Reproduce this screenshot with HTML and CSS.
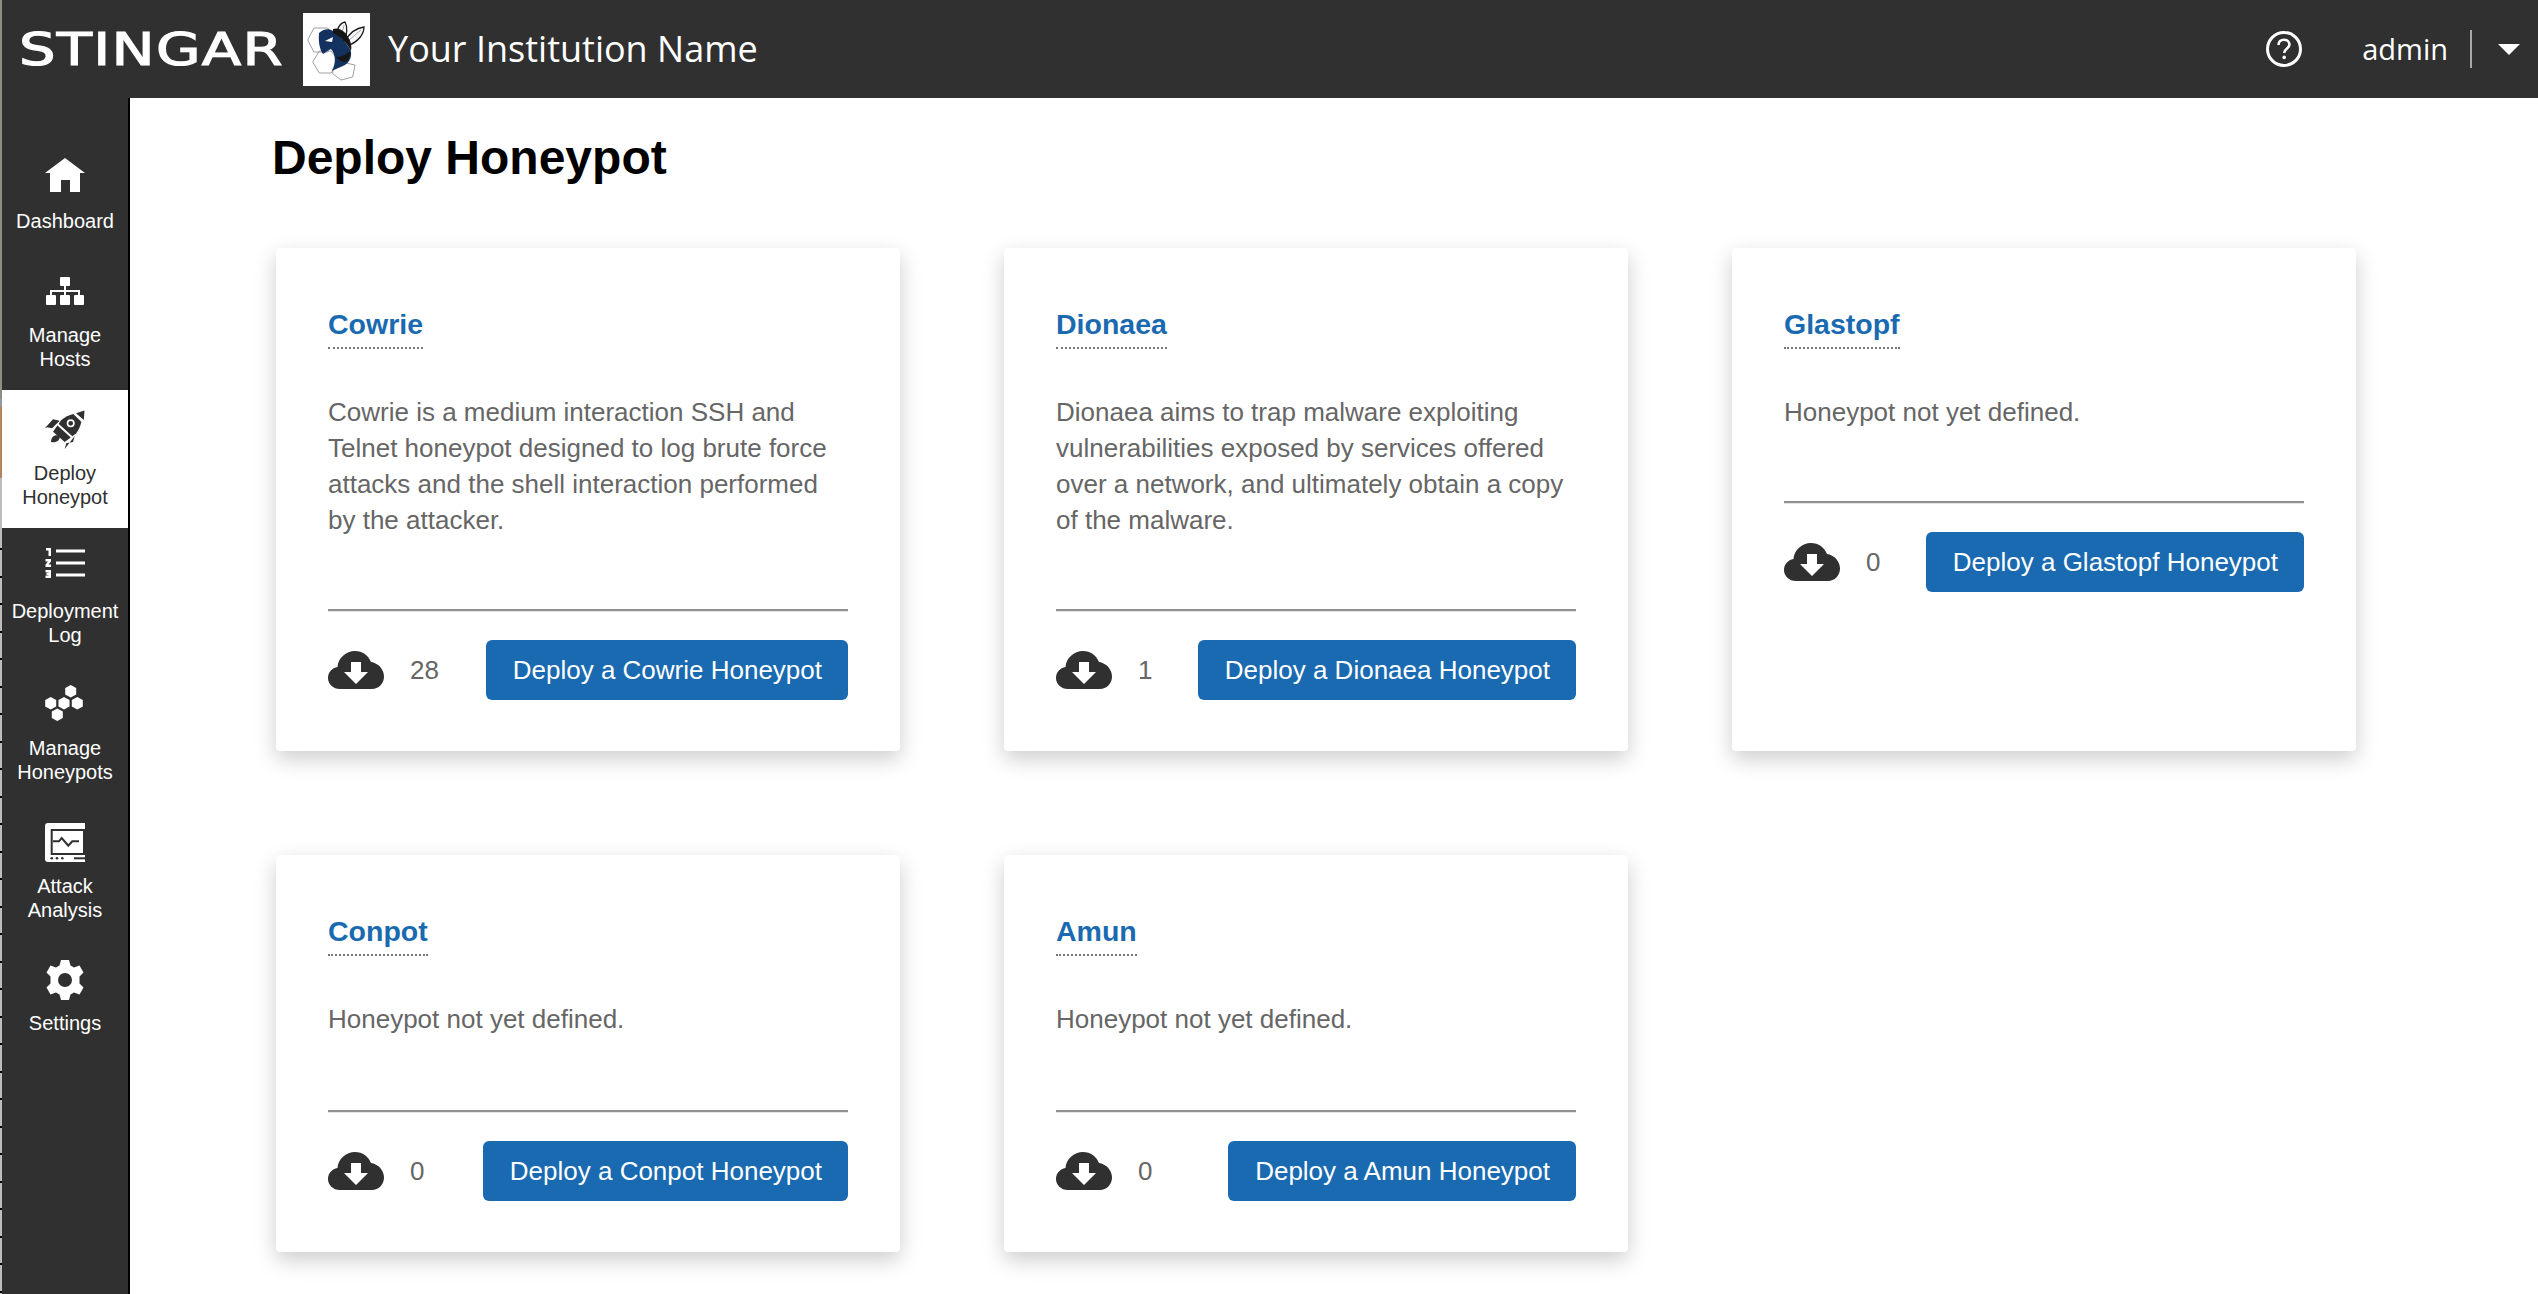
FILE: index.html
```html
<!DOCTYPE html>
<html lang="en">
<head>
    <meta charset="UTF-8">
    <meta name="viewport" content="width=device-width, initial-scale=1.0">
    <title>Deploy Honeypot</title>
    <link rel="stylesheet" href="styles.css">
</head>
<body>
    <header class="topbar">
        <div class="brand">
            <span class="brand-name"><span class="brand-text">STINGAR</span></span>
            <div class="brand-logo">
                <svg viewBox="0 0 67 73" width="67" height="73">
                    <g fill="none" stroke="#a0a0a0" stroke-width="1">
                        <path d="M4.700 27 L11 15 L24.700 15 L30.700 27 L24.700 39 L11 39 Z"/>
                        <path d="M9.700 49 L16.300 38 L28 38 L36.300 49 L28 60 L16.300 60 Z"/>
                        <path d="M29.700 55.700 L38 49 L52 52 L49.700 64 L38 67 L29.700 60.700 Z"/>
                    </g>
                    <g fill="#f6f6f6" stroke="#1a1a1a" stroke-width="1.300">
                        <path d="M33 26 C33 18 36 10 42 9 C45 14 44 22 41 28 Z"/>
                        <path d="M42 28 C46 21 53 15 61 14 C61 21 55 29 46 32 Z"/>
                    </g>
                    <g fill="none" stroke="#8a8a8a" stroke-width="0.700">
                        <path d="M38 24 L41 12"/>
                        <path d="M46 27 L58 17"/>
                    </g>
                    <path d="M16 20 C20 16 26 15 30 18 C36 22 42 28 47 36 C50 42 47 50 40 53 C36 55 32 56 29 58 C33 50 33 42 28 36 C25 37 22 40 20 41 C18 38 15 32 16 20 Z" fill="#13325f"/>
                    <path d="M30 16 C36 14 42 18 45 24 C48 28 49 34 48 38 C44 30 38 24 30 20 Z" fill="#161616"/>
                    <path d="M33 44 C38 44 43 42 47 38 C48 42 46 46 43 49 C39 49 36 47 33 44 Z" fill="#161616"/>
                    <path d="M22 28 L30 24 L29 29 Z" fill="#fff"/>
                </svg>
            </div>
            <span class="institution">Your Institution Name</span>
        </div>
        <div class="user-menu">
            <svg class="help-icon" viewBox="0 0 36 36" width="36" height="36">
                <circle cx="18" cy="18" r="16.500" fill="none" stroke="#fff" stroke-width="3"/>
                <path d="M12.500 14 C12.500 10.500 15 8.800 18 8.800 C21.200 8.800 23.500 10.800 23.500 13.600 C23.500 17.400 18.200 17.600 18.200 22" fill="none" stroke="#fff" stroke-width="2.600"/>
                <circle cx="18.200" cy="26.400" r="1.800" fill="#fff"/>
            </svg>
            <span class="user-name">admin</span>
            <span class="user-divider"></span>
            <span class="user-caret"></span>
        </div>
    </header>

    <div class="layout">
        <nav class="sidebar">
            <a class="nav-item nav-first">
                <div class="icon-slot">
                    <svg viewBox="0 0 40 34" width="40" height="34"><path d="M20 0 L40 15 L35 15 L35 34 L25 34 L25 22 L16 22 L16 34 L5 34 L5 15 L0 15 Z" fill="#fff"/></svg>
                </div>
                <span>Dashboard</span>
            </a>
            <a class="nav-item">
                <div class="icon-slot icon-low">
                    <svg viewBox="0 0 38 28" width="38" height="28"><g fill="#fff"><rect x="14" y="0" width="10" height="9" rx="1"/><rect x="0" y="18" width="10" height="10" rx="1"/><rect x="14" y="18" width="10" height="10" rx="1"/><rect x="28" y="18" width="10" height="10" rx="1"/><rect x="18" y="9" width="2" height="9"/><rect x="4" y="13" width="30" height="2"/><rect x="4" y="13" width="2" height="5"/><rect x="32" y="13" width="2" height="5"/></g></svg>
                </div>
                <span>Manage<br>Hosts</span>
            </a>
            <a class="nav-item active">
                <div class="icon-slot">
                    <svg viewBox="0 0 40 40" width="40" height="40">
                        <g fill="#303030">
                            <path d="M31 3.300 L39.500 0.500 L38.800 10 Z"/>
                            <path d="M28.300 4 L36.300 11.700 C35.500 16 33.500 20 31.300 23.300 L19.700 32 L8 21.700 L16.300 10 C20 7 24 5 28.300 4 Z"/>
                            <path d="M-0.300 18.300 L8 9.300 L14.700 10.700 L7 18.300 L2.300 17.300 Z"/>
                            <path d="M19.700 39 L29.700 26 L28 32 L21.300 33.300 Z"/>
                            <path d="M14.700 26 C10 24 6 27 6 32 C11 33 15 31 14.700 26 Z"/>
                        </g>
                        <path d="M12.300 14 L27 27.300" stroke="#fff" stroke-width="2"/>
                        <circle cx="25.700" cy="13.300" r="3.200" fill="none" stroke="#fff" stroke-width="1.600"/>
                    </svg>
                </div>
                <span>Deploy<br>Honeypot</span>
            </a>
            <a class="nav-item">
                <div class="icon-slot">
                    <svg viewBox="0 0 40 30" width="40" height="30"><g fill="#fff"><rect x="11" y="1.500" width="29" height="3"/><rect x="11" y="13.500" width="29" height="3"/><rect x="11" y="25.500" width="29" height="3"/><path d="M1 0 H6 V8 H3.500 V2.500 H1 Z"/><path d="M0.500 11 H6 V13.500 L3.500 16.500 H6 V19 H0.500 V16.500 L3 13.500 H0.500 Z"/><path d="M0.500 22 H6 V30 H0.500 V27.500 H3.500 V27 H1.500 V25 H3.500 V24.500 H0.500 Z"/></g></svg>
                </div>
                <span>Deployment<br>Log</span>
            </a>
            <a class="nav-item">
                <div class="icon-slot">
                    <svg viewBox="0 0 40 36" width="40" height="36"><g fill="#fff"><path d="M25.700 0 L31.200 3 V9.500 L25.700 12.500 L20.200 9.500 V3 Z"/><path d="M5.700 12 L11.200 15 V21.500 L5.700 24.500 L0.200 21.500 V15 Z"/><path d="M19 12 L24.500 15 V21.500 L19 24.500 L13.500 21.500 V15 Z"/><path d="M32.300 12 L37.800 15 V21.500 L32.300 24.500 L26.800 21.500 V15 Z"/><path d="M12.300 23.500 L17.800 26.500 V33 L12.300 36 L6.800 33 V26.500 Z"/></g></svg>
                </div>
                <span>Manage<br>Honeypots</span>
            </a>
            <a class="nav-item">
                <div class="icon-slot">
                    <svg viewBox="0 0 40 39" width="40" height="39">
                        <path d="M3 0 H40 V39 H3 Q0 39 0 36 V3 Q0 0 3 0 Z" fill="#fff"/>
                        <rect x="6.700" y="7" width="32.300" height="24" fill="none" stroke="#303030" stroke-width="2"/>
                        <path d="M8 18.300 H14 L16.700 15 L23.300 22.700 L27.300 18.300 H34" fill="none" stroke="#303030" stroke-width="2"/>
                        <g fill="#303030">
                            <circle cx="6.700" cy="35.300" r="1.300"/>
                            <circle cx="12" cy="35.300" r="1.300"/>
                            <circle cx="17.300" cy="35.300" r="1.300"/>
                            <rect x="29" y="34.300" width="11" height="2"/>
                        </g>
                    </svg>
                </div>
                <span>Attack<br>Analysis</span>
            </a>
            <a class="nav-item">
                <div class="icon-slot">
                    <svg viewBox="0 0 40 40" width="40" height="40"><path fill="#fff" fill-rule="evenodd" d="M16 0 H24 L25.500 5.500 L29 7.500 L34.500 5.500 L38.500 12.500 L34.500 16.500 V23.500 L38.500 27.500 L34.500 34.500 L29 32.500 L25.500 34.500 L24 40 H16 L14.500 34.500 L11 32.500 L5.500 34.500 L1.500 27.500 L5.500 23.500 V16.500 L1.500 12.500 L5.500 5.500 L11 7.500 L14.500 5.500 Z M20 13 A7 7 0 1 0 20 27 A7 7 0 1 0 20 13 Z"/></svg>
                </div>
                <span>Settings</span>
            </a>
        </nav>

        <main class="content">
            <h1 class="page-title">Deploy Honeypot</h1>
            <div class="card-grid">
                <section class="card">
                    <h2 class="card-title">Cowrie</h2>
                    <p class="card-text">Cowrie is a medium interaction SSH and Telnet honeypot designed to log brute force attacks and the shell interaction performed by the attacker.</p>
                    <hr class="card-rule">
                    <div class="card-foot">
                        <svg class="cloud" viewBox="0 0 56 38" width="56" height="38"><use href="#cloud-shape"/></svg>
                        <span class="count">28</span>
                        <button class="deploy-btn" type="button">Deploy a Cowrie Honeypot</button>
                    </div>
                </section>
                <section class="card">
                    <h2 class="card-title">Dionaea</h2>
                    <p class="card-text">Dionaea aims to trap malware exploiting vulnerabilities exposed by services offered over a network, and ultimately obtain a copy of the malware.</p>
                    <hr class="card-rule">
                    <div class="card-foot">
                        <svg class="cloud" viewBox="0 0 56 38" width="56" height="38"><use href="#cloud-shape"/></svg>
                        <span class="count">1</span>
                        <button class="deploy-btn" type="button">Deploy a Dionaea Honeypot</button>
                    </div>
                </section>
                <section class="card">
                    <h2 class="card-title">Glastopf</h2>
                    <p class="card-text">Honeypot not yet defined.</p>
                    <hr class="card-rule">
                    <div class="card-foot">
                        <svg class="cloud" viewBox="0 0 56 38" width="56" height="38"><use href="#cloud-shape"/></svg>
                        <span class="count">0</span>
                        <button class="deploy-btn" type="button">Deploy a Glastopf Honeypot</button>
                    </div>
                </section>
                <section class="card">
                    <h2 class="card-title">Conpot</h2>
                    <p class="card-text">Honeypot not yet defined.</p>
                    <hr class="card-rule">
                    <div class="card-foot">
                        <svg class="cloud" viewBox="0 0 56 38" width="56" height="38"><use href="#cloud-shape"/></svg>
                        <span class="count">0</span>
                        <button class="deploy-btn" type="button">Deploy a Conpot Honeypot</button>
                    </div>
                </section>
                <section class="card">
                    <h2 class="card-title">Amun</h2>
                    <p class="card-text">Honeypot not yet defined.</p>
                    <hr class="card-rule">
                    <div class="card-foot">
                        <svg class="cloud" viewBox="0 0 56 38" width="56" height="38"><use href="#cloud-shape"/></svg>
                        <span class="count">0</span>
                        <button class="deploy-btn" type="button">Deploy a Amun Honeypot</button>
                    </div>
                </section>
            </div>
        </main>
    </div>

    <svg class="svg-defs" width="0" height="0">
        <defs>
            <g id="cloud-shape">
                <path fill="#303030" d="M12 38 C5 38 0 33 0 27 C0 21.500 4 17 9.500 16 C10 7 18 0 27 0 C34.500 0 40.500 4.500 43 11 C50 12 56 18 56 25.500 C56 32.500 50.500 38 44 38 Z"/>
                <path fill="#fff" d="M23 11 H33 V21 H40 L28 33 L16 21 H23 Z"/>
            </g>
        </defs>
    </svg>
</body>
</html>
```

FILE: styles.css
```css
* {
    box-sizing: border-box;
}
html, body {
    height: 100%;
}
body {
    margin: 0;
    padding-left: 2px;
    font-family: "Liberation Sans", Arial, sans-serif;
    color: #666;
    overflow: hidden;
    /* edge of the window behind, left in the screenshot */
    background:
        repeating-linear-gradient(#000 0 2px, transparent 2px 27.500px) 0 548px / 2px 746px no-repeat,
        linear-gradient(#8d8d84 0 398px, #8f9aa0 398px 407px, #b5845a 407px 478px, #bdbdbd 478px) 0 0 / 2px 100% no-repeat,
        #fff;
}

.topbar {
    display: flex;
    align-items: center;
    justify-content: space-between;
    height: 98px;
    background-color: #303030;
    color: #fff;
}
.brand {
    display: flex;
    align-items: center;
}
.brand-name {
    display: block;
    width: 283px;
    padding-left: 17px;
    height: 60px;
    line-height: 61px;
    overflow: hidden;
}
.brand-text {
    display: inline-block;
    font-family: "DejaVu Sans", sans-serif;
    font-size: 45px;
    letter-spacing: 1px;
    -webkit-text-stroke: 1.200px #fff;
    transform: scaleX(1.28);
    transform-origin: left center;
}
.brand-logo {
    width: 67px;
    height: 73px;
    margin-left: 18px;
    background-color: #fff;
}
.brand-logo svg {
    display: block;
}
.institution {
    margin-left: 18px;
    padding-bottom: 2px;
    font-family: "Open Sans", sans-serif;
    font-size: 36px;
}
.user-menu {
    display: flex;
    align-items: center;
    padding-right: 18px;
}
.user-name {
    margin-left: 60px;
    padding-bottom: 2px;
    font-family: "Open Sans", sans-serif;
    font-size: 29px;
}
.user-divider {
    width: 2px;
    height: 38px;
    margin-left: 22px;
    background-color: #a8a8a8;
}
.user-caret {
    width: 0;
    height: 0;
    margin-left: 26px;
    border-left: 11px solid transparent;
    border-right: 11px solid transparent;
    border-top: 11px solid #fff;
}

.layout {
    display: flex;
    height: calc(100% - 98px);
}
.sidebar {
    flex: none;
    width: 128px;
    padding-top: 17px;
    background-color: #303030;
    border-right: 2px solid #000;
}
.nav-item {
    display: block;
    height: 137.500px;
    padding-top: 20px;
    font-size: 20px;
    line-height: 24px;
    text-align: center;
    color: #fff;
}
.nav-first {
    padding-top: 43px;
}
.nav-item.active {
    background-color: #fff;
    color: #303030;
}
.icon-slot {
    display: flex;
    justify-content: center;
    align-items: flex-start;
    height: 51px;
}
.icon-low {
    height: 50px;
    padding-top: 4px;
}
.icon-slot svg {
    display: block;
}

.content {
    flex: 1;
    padding-left: 142px;
    background-color: #fff;
}
.page-title {
    margin: 32px 0 0;
    font-size: 48px;
    line-height: 56px;
    font-weight: bold;
    color: #000;
}
.card-grid {
    display: grid;
    grid-template-columns: repeat(3, 624px);
    gap: 104px;
    margin-top: 62px;
    margin-left: 4px;
}
.card {
    display: flex;
    flex-direction: column;
    padding: 52px 52px 51px;
    background-color: #fff;
    border-radius: 4px;
    box-shadow: 0 8px 22px rgba(0, 0, 0, 0.2);
}
.card-title {
    align-self: flex-start;
    margin: 8px 0 0;
    padding-bottom: 7px;
    font-size: 28.500px;
    line-height: 32px;
    font-weight: bold;
    color: #1a6ab1;
    border-bottom: 2px dotted #777;
}
.card-text {
    margin: 45px 0 0;
    font-size: 26px;
    line-height: 36px;
}
.card-rule {
    width: 100%;
    margin: 71px 0 0;
    border: 0;
    border-top: 2px solid #8f8f8f;
    border-bottom: 1px solid #e4e4e4;
}
.card:nth-child(n+4) .card-rule {
    margin-top: 73px;
}
.card-foot {
    display: flex;
    align-items: center;
    margin-top: 28px;
}
.count {
    margin-left: 26px;
    font-size: 26px;
}
.deploy-btn {
    height: 60px;
    margin-left: auto;
    padding: 0 26px 0 27px;
    border: none;
    border-radius: 6px;
    background-color: #1a6ab1;
    color: #fff;
    font-family: inherit;
    font-size: 26px;
    cursor: pointer;
}
.svg-defs {
    position: absolute;
}
```
